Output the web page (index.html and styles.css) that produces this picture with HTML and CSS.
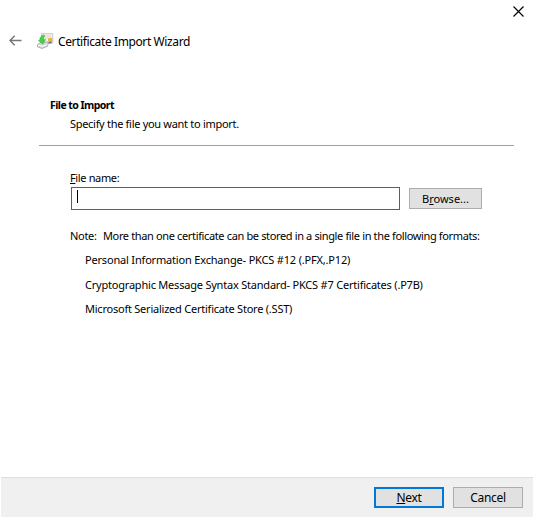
FILE: index.html
```html
<!DOCTYPE html>
<html lang="en">
<head>
<meta charset="utf-8">
<title>Certificate Import Wizard</title>
<link rel="stylesheet" href="styles.css">
</head>
<body>
<div class="window">
  <div class="caption">
    <svg class="close" width="11" height="11" viewBox="0 0 11 11"><path d="M.5.5l10 10M10.5.5l-10 10" stroke="#000" stroke-width="1.15" fill="none"/></svg>
  </div>
  <header class="header">
    <svg class="back" width="13" height="11" viewBox="0 0 13 11"><path d="M12.5 5.5H1M5.7.8L1 5.5l4.7 4.7" stroke="#777" stroke-width="1.5" fill="none"/></svg>
    <svg class="logo" width="17" height="16" viewBox="0 0 17 16">
      <path d="M4.5.7h11.3v8.8H4.5z" fill="#f5f1e8" stroke="#c7c3bb" stroke-width=".9"/>
      <path d="M7 3h7M8 5h4" stroke="#d9d4c9" stroke-width=".8"/>
      <path d="M.5 11.5l4-2.5h7l-1 4.3-5.5 2.2-4.5-1.7z" fill="#d7dadc" stroke="#929799" stroke-width=".7"/>
      <path d="M1 12l4 1.3 5.5-1.5" fill="none" stroke="#fff" stroke-width=".9"/>
      <path d="M6.5 2C4 2.8 2.6 4.6 2.8 7.2L1.4 7.6l4.4 3.6L8.6 6.4l-2 .4c-.2-1.6.1-2.8 1.4-3.8z" fill="#48d04a" stroke="#30a938" stroke-width=".5"/>
      <path d="M12.2 8l-.7 3 1.6-.7 1.5.8L14.2 8z" fill="#446da8"/>
      <circle cx="13.2" cy="7" r="1.9" fill="#f6b52d" stroke="#d98e16" stroke-width=".5"/>
    </svg>
    <h1 class="title">Certificate Import Wizard</h1>
  </header>
  <main class="page">
    <section class="intro">
      <h2 class="heading">File to Import</h2>
      <p class="subheading">Specify the file you want to import.</p>
    </section>
    <section class="form">
      <label class="label"><u>F</u>ile name:</label>
      <div class="row">
        <div class="input"><span class="caret"></span></div>
        <button class="btn browse">B<u>r</u>owse...</button>
      </div>
      <p class="note"><span class="note-label">Note:</span><span>More than one certificate can be stored in a single file in the following formats:</span></p>
      <ul class="formats">
        <li class="pfx">Personal Information Exchange- PKCS #12 (.PFX,.P12)</li>
        <li class="p7b">Cryptographic Message Syntax Standard- PKCS #7 Certificates (.P7B)</li>
        <li class="sst">Microsoft Serialized Certificate Store (.SST)</li>
      </ul>
    </section>
  </main>
  <footer class="footer">
    <button class="btn primary"><u>N</u>ext</button>
    <button class="btn cancel">Cancel</button>
  </footer>
</div>
</body>
</html>
```
FILE: styles.css
```css
* { box-sizing: border-box; margin: 0; padding: 0; }
body { background: #fff; color: #000; font: 11px/14px "Noto Sans", sans-serif; overflow: hidden; }
.window { width: 533px; height: 517px; display: flex; flex-direction: column; white-space: nowrap; }
svg { display: block; }
u { text-decoration-thickness: 1px; text-underline-offset: 1px; text-decoration-skip-ink: none; }
.caption { height: 28px; display: flex; justify-content: flex-end; padding: 6px 9px 0 0; }
.header { height: 28px; display: flex; align-items: center; padding-left: 9px; }
.back { margin-bottom: 3px; }
.logo { margin: 0 0 2px 15px; }
.title { margin-left: 4px; font-size: 12px; font-weight: 400; line-height: 16px; letter-spacing: -0.39px; }
.page { flex: 1; padding: 42px 19px 0 39px; }
.intro { height: 48px; border-bottom: 1px solid #a0a0a0; padding-left: 11px; }
.heading { font-size: 10.5px; font-weight: 700; line-height: 14px; letter-spacing: -0.55px; }
.subheading { margin: 5px 0 0 20px; letter-spacing: -0.3px; }
.form { padding: 25px 0 0 31px; letter-spacing: -0.36px; }
.label { display: block; height: 16px; }
.row { display: flex; align-items: center; padding-left: 1px; }
.input { width: 329px; height: 23px; border: 1px solid #0078d7; padding: 2px 5px; }
.caret { display: block; width: 1px; height: 13px; background: #000; }
.btn { display: block; border: 1px solid #adadad; background: #e1e1e1; color: #000; font: 11px/14px "Noto Sans", sans-serif; height: 21px; letter-spacing: 0; }
.browse { width: 73px; margin-left: 9px; }
.note { display: flex; margin-top: 19px; }
.note-label { width: 33px; letter-spacing: -0.3px; }
.formats { list-style: none; margin: 10px 0 0 15px; display: grid; grid-template-rows: 25px 24px 14px; }
.pfx { letter-spacing: -0.18px; }
.p7b { letter-spacing: -0.21px; }
.sst { letter-spacing: -0.23px; }
.footer { height: 40px; margin-left: 1px; border-top: 1px solid #dfdfdf; background: #f0f0f0; display: flex; padding: 9px 10px 0 0; justify-content: flex-end; gap: 9px; }
.footer .btn { width: 70px; font-size: 12px; letter-spacing: -0.3px; }
.footer .primary { border: 2px solid #0078d7; }
```
